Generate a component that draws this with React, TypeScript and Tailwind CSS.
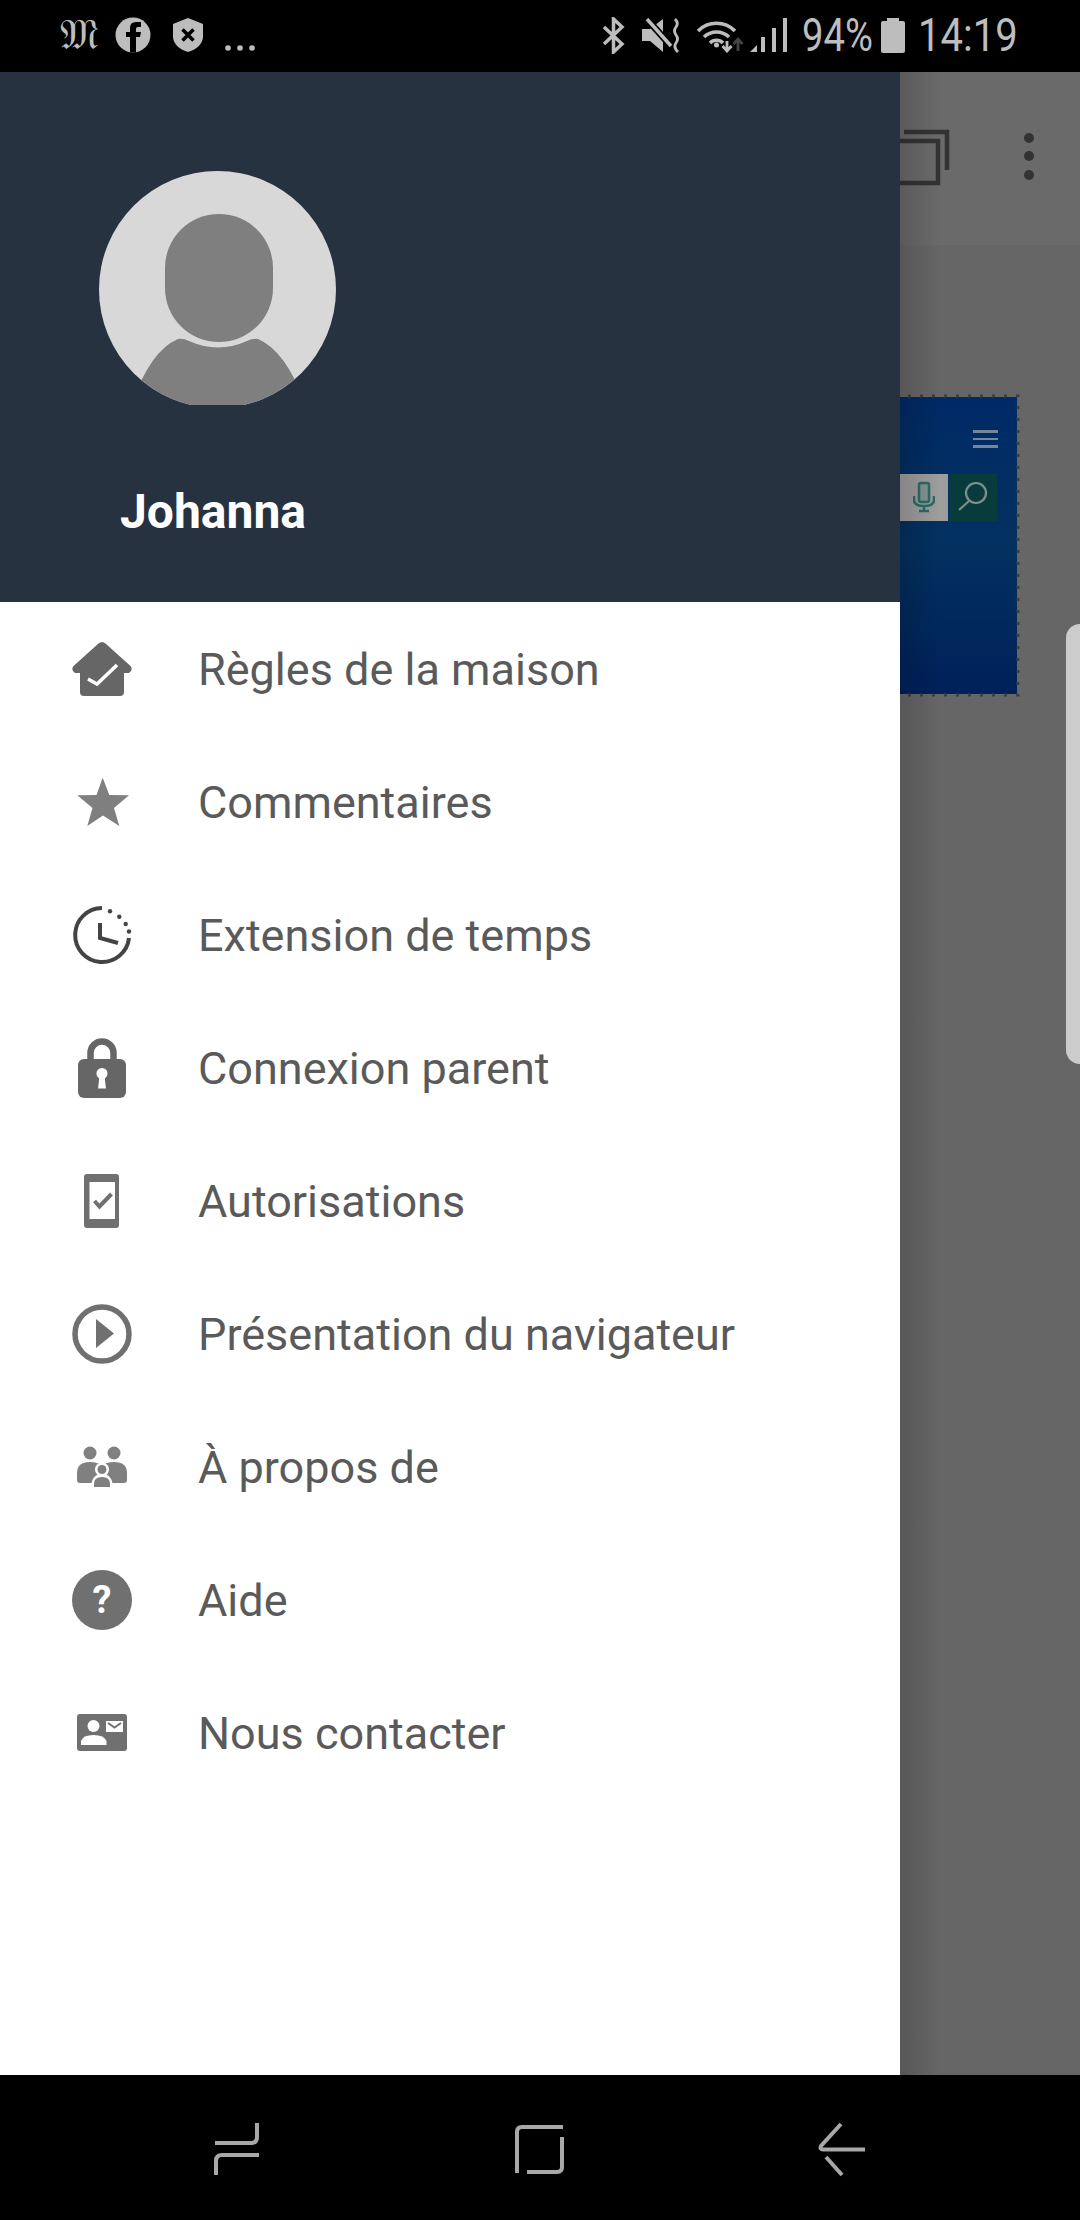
const statusColor = '#bdbdbd';

function LeftStatusIcons() {
  return (
    <div className="flex items-center pl-[60px]">
      <span className="w-[38px] text-center font-['DejaVu_Serif',serif] text-[42px] leading-[36px] text-[#bdbdbd]">𝔐</span>
      <svg width="36" height="36" viewBox="0 0 36 36" className="ml-[17px]">
        <circle cx="18" cy="18" r="17.5" fill={statusColor} />
        <path d="M15 35.5V20h-4v-5h4v-4q0-6 6-6h5v5h-3q-2 0-2 2v3h5l-1 5h-4v15.5z" fill="#000" />
      </svg>
      <svg width="30" height="34" viewBox="0 0 30 34" className="ml-[22px]">
        <path d="M15 0l15 6v12q0 11-15 16Q0 29 0 18V6z" fill={statusColor} />
        <path d="M9.5 11.5l11 11M20.5 11.5l-11 11" stroke="#000" strokeWidth="3.5" />
      </svg>
      <svg width="30" height="36" viewBox="0 0 30 36" className="ml-[22px]">
        <circle cx="3" cy="31" r="2.8" fill={statusColor} />
        <circle cx="15" cy="31" r="2.8" fill={statusColor} />
        <circle cx="27" cy="31" r="2.8" fill={statusColor} />
      </svg>
    </div>
  );
}

function RightStatusIcons() {
  return (
    <div className="flex items-center pr-[66px]">
      <svg width="23" height="37" viewBox="0 0 23 37">
        <path d="M2 10l18 17-8.500 8V2l8.500 8L2 27" fill="none" stroke={statusColor} strokeWidth="3.5" />
      </svg>
      <svg width="38" height="35" viewBox="0 0 38 35" className="ml-[17px]">
        <path d="M0 11h8L21 1v33L8 23H0z" fill={statusColor} />
        <path d="M4 0l25 28" stroke="#000" strokeWidth="7" />
        <path d="M5 1l24 27" stroke={statusColor} strokeWidth="3.500" />
        <path d="M33 1q4 4 1 8t0 8q3 4 0 8t2 9" fill="none" stroke={statusColor} strokeWidth="2.800" />
      </svg>
      <svg width="49" height="35" viewBox="0 0 49 35" className="ml-[16px]">
        <g fill="none" stroke={statusColor} strokeWidth="3.500">
          <path d="M2 13a26 26 0 0 1 37 0" />
          <path d="M8 19a18 18 0 0 1 25 0" />
          <path d="M14 25a9 9 0 0 1 13 0" />
        </g>
        <circle cx="20.500" cy="27" r="2.500" fill={statusColor} />
        <path d="M31 23v9M26.500 28l4.500 5 4.500-5" fill="none" stroke={statusColor} strokeWidth="2.800" />
        <path d="M42 33V23M37.500 26l4.500-5 4.500 5" fill="none" stroke="#444" strokeWidth="2.800" />
      </svg>
      <svg width="37" height="34" viewBox="0 0 37 34" className="ml-[5px]">
        <path d="M0 34l7-7v7z" fill={statusColor} />
        <path d="M11 19h4v15h-4zM22 10h4v24h-4zM33 0h4v34h-4z" fill={statusColor} />
      </svg>
      <span className="ml-[15px] w-[69px] origin-left scale-x-[0.83] whitespace-nowrap text-[46px] leading-[46px] font-normal text-[#bdbdbd]">
        94%
      </span>
      <svg width="24" height="35" viewBox="0 0 24 35" className="ml-[10px]">
        <path d="M6 0h12v3h4q2 0 2 2v28q0 2-2 2H2q-2 0-2-2V5q0-2 2-2h4z" fill={statusColor} />
      </svg>
      <span className="ml-[13px] w-[96px] origin-left scale-x-[0.87] whitespace-nowrap text-[46px] leading-[46px] font-normal text-[#bdbdbd]">
        14:19
      </span>
    </div>
  );
}

function Avatar() {
  return (
    <svg width="237" height="234" viewBox="0 0 237 234">
      <defs>
        <clipPath id="avatarCircle">
          <circle cx="118.500" cy="118.500" r="118.500" />
        </clipPath>
      </defs>
      <circle cx="118.500" cy="118.500" r="118.500" fill="#d8d8d8" />
      <rect x="66" y="43" width="108" height="128" rx="54" ry="54" fill="#7f7f7f" />
      <path
        d="M30 240Q50 180 79 168q5-1 11 2 29 13 58 0 6-3 11-2 29 12 50 72z"
        fill="#7f7f7f"
        clipPath="url(#avatarCircle)"
      />
    </svg>
  );
}

const HouseIcon = (
  <svg width="60" height="60" viewBox="0 0 60 60">
    <path d="M26.500 4.500q3.500-3 7 0L58.500 27q3 4-1.500 7H52v19q0 4-4 4H12q-4 0-4-4V34H3q-4.500-3-1.500-7z" fill="#666" />
    <path d="M16 40l9 5 20-19" fill="none" stroke="#fff" strokeWidth="3.500" />
  </svg>
);

const StarIcon = (
  <svg width="60" height="60" viewBox="0 0 60 60">
    <path d="M30.700 5.700L37.300 23 57 23.300 42 36l5.300 18L31 43.500 15.300 54l5.200-18L5.300 23.300 24.500 23z" fill="#7f7f7f" />
  </svg>
);

const ClockIcon = (
  <svg width="60" height="60" viewBox="0 0 60 60">
    <g fill="none" stroke="#444" strokeWidth="4">
      <path d="M30 3A27 27 0 1 0 57 33" />
      <path d="M28 18v15l18 5" />
    </g>
    <g fill="#444">
      <circle cx="38" cy="6.300" r="2.200" />
      <circle cx="47.300" cy="11.700" r="2.200" />
      <circle cx="53.700" cy="19" r="2.200" />
      <circle cx="57" cy="26.500" r="2.200" />
    </g>
  </svg>
);

const LockIcon = (
  <svg width="60" height="60" viewBox="0 0 60 60">
    <path d="M18.500 24V15a11.500 11.500 0 0 1 23 0v9" fill="none" stroke="#666" strokeWidth="6.500" />
    <rect x="6" y="21" width="48" height="39" rx="6" fill="#666" />
    <circle cx="30" cy="35.500" r="5.500" fill="#fff" />
    <path d="M27.500 38L26 50.500h8L32.500 38z" fill="#fff" />
  </svg>
);

const PhoneIcon = (
  <svg width="60" height="60" viewBox="0 0 60 60">
    <rect x="12" y="3" width="35" height="54" rx="3" fill="#707070" />
    <rect x="17.500" y="11" width="25.500" height="37" fill="#fff" />
    <path d="M22.500 30l5 5.500L39.500 23" fill="none" stroke="#707070" strokeWidth="4" />
  </svg>
);

const PlayIcon = (
  <svg width="60" height="60" viewBox="0 0 60 60">
    <circle cx="30" cy="30" r="27" fill="none" stroke="#707070" strokeWidth="5.500" />
    <path d="M24 15l18 14.500L24 44z" fill="#707070" />
  </svg>
);

const GroupIcon = (
  <svg width="60" height="60" viewBox="0 0 60 60">
    <circle cx="18" cy="16" r="6.500" fill="#808080" />
    <circle cx="42" cy="16" r="6.500" fill="#808080" />
    <path d="M5 36q0-11 13-11 8 0 12 4 4-4 12-4 13 0 13 11v7q0 3-3 3H8q-3 0-3-3z" fill="#808080" />
    <circle cx="30" cy="32.500" r="7" fill="#fff" />
    <path d="M19 52q0-15 11-15t11 15z" fill="#fff" />
    <circle cx="30" cy="32.500" r="4.500" fill="#808080" />
    <path d="M22 50v-3q0-7 8-7t8 7v3z" fill="#808080" />
  </svg>
);

const HelpIcon = (
  <svg width="60" height="60" viewBox="0 0 60 60">
    <circle cx="30" cy="30" r="30" fill="#707070" />
    <text x="30" y="43" textAnchor="middle" fontFamily="Roboto, sans-serif" fontSize="38" fontWeight="700" fill="#fff">
      ?
    </text>
  </svg>
);

const ContactIcon = (
  <svg width="60" height="60" viewBox="0 0 60 60">
    <rect x="5" y="11" width="50" height="37" rx="3" fill="#707070" />
    <path d="M34 18h17v11H34z" fill="#fff" />
    <path d="M36 20l6.500 4.500L49 20" fill="none" stroke="#707070" strokeWidth="2" />
    <circle cx="21.500" cy="23" r="6" fill="#fff" />
    <path d="M9 42v-4q2-6 12.500-6T34.500 38v4z" fill="#fff" />
  </svg>
);

const menuItems = [
  { label: 'Règles de la maison', icon: HouseIcon },
  { label: 'Commentaires', icon: StarIcon },
  { label: 'Extension de temps', icon: ClockIcon },
  { label: 'Connexion parent', icon: LockIcon },
  { label: 'Autorisations', icon: PhoneIcon },
  { label: 'Présentation du navigateur', icon: PlayIcon },
  { label: 'À propos de', icon: GroupIcon },
  { label: 'Aide', icon: HelpIcon },
  { label: 'Nous contacter', icon: ContactIcon },
];

function Drawer() {
  return (
    <aside className="flex w-[900px] shrink-0 flex-col bg-white">
      <div className="h-[530px] bg-[#263240] pt-[99px] pl-[99px]">
        <Avatar />
        <div className="mt-[80px] ml-[21px] text-[48px] leading-[54px] font-bold text-white">Johanna</div>
      </div>
      <ul>
        {menuItems.map((item) => (
          <li key={item.label} className="flex h-[133px] items-center pl-[72px]">
            {item.icon}
            <span className="ml-[66px] pt-[3px] text-[45px] text-[#5a5a5a]">{item.label}</span>
          </li>
        ))}
      </ul>
    </aside>
  );
}

function BackgroundPage() {
  return (
    <div className="relative flex-1 overflow-hidden bg-[#666]">
      <div className="flex h-[173px] items-start bg-[#6a6a6a]">
        <svg width="50" height="60" viewBox="0 0 50 60" className="mt-[57px] ml-[-2px] overflow-visible">
          <path d="M6 3h43v38" fill="none" stroke="#333" strokeWidth="4.500" />
          <path d="M-6 12h46v42H-6" fill="none" stroke="#333" strokeWidth="4.500" />
        </svg>
        <svg width="12" height="50" viewBox="0 0 12 50" className="mt-[61px] ml-[75px]">
          <circle cx="6" cy="5" r="5" fill="#333" />
          <circle cx="6" cy="23" r="5" fill="#333" />
          <circle cx="6" cy="42" r="5" fill="#333" />
        </svg>
      </div>
      <div className="relative mt-[152px] h-[297px] w-[117px] bg-gradient-to-b from-[#002a66] via-[#03315f] to-[#00205a]">
        <div className="flex flex-col items-end gap-[5px] pt-[33px] pr-[19px]">
          <div className="h-[2.5px] w-[25px] bg-[#76859a]" />
          <div className="h-[2.5px] w-[25px] bg-[#76859a]" />
          <div className="h-[2.5px] w-[25px] bg-[#76859a]" />
        </div>
        <div className="mt-[26px] flex h-[47px]">
          <div className="flex w-[48px] items-center justify-center bg-[#9d9d9d]">
            <svg width="22" height="32" viewBox="0 0 22 32">
              <path d="M6 4q0-2 2-2h6q2 0 2 2v15q0 2-2 2H8q-2 0-2-2z" fill="#7f9593" stroke="#2d6a66" strokeWidth="2.500" />
              <path d="M1 15v4q0 6 10 6t10-6v-4M11 25v4M6 30h10" fill="none" stroke="#2d6a66" strokeWidth="2.500" />
            </svg>
          </div>
          <div className="ml-px flex w-[48px] items-center justify-center bg-[#083c3c]">
            <svg width="32" height="32" viewBox="0 0 32 32">
              <circle cx="19" cy="12" r="10" fill="none" stroke="#7f908e" strokeWidth="2.200" />
              <path d="M12 20L2 29" stroke="#7f908e" strokeWidth="2.200" />
            </svg>
          </div>
        </div>
        <svg width="117" height="297" viewBox="0 0 117 297" className="absolute inset-0 overflow-visible">
          <path d="M8 -1H118V298H8" fill="none" stroke="#3f3f3f" strokeWidth="3" strokeDasharray="3 9" />
        </svg>
      </div>
      {/* shadow the drawer casts over the page */}
      <div className="absolute inset-y-0 left-0 w-[40px] bg-gradient-to-r from-black/15 to-transparent" />
      <div className="absolute top-[552px] right-0 h-[440px] w-[14px] rounded-l-[20px] bg-[#cccccc]" />
    </div>
  );
}

function NavBar() {
  return (
    <div className="flex h-[145px] items-center justify-center gap-[243px] bg-black">
      <svg width="60" height="60" viewBox="0 0 60 60" className="mt-[1px]">
        <g fill="none" stroke="#a8a8a8" strokeWidth="4">
          <path d="M8 25h36q6 0 6-6V5" />
          <path d="M52 37H15q-6 0-6 6v14" />
        </g>
      </svg>
      <svg width="60" height="60" viewBox="0 0 60 60" className="mt-[1px]">
        <g fill="none" stroke="#a8a8a8" strokeWidth="4">
          <path d="M53 9H12q-5 0-5 5v41" />
          <path d="M52 19v30q0 5-5 5H17" />
        </g>
      </svg>
      <svg width="60" height="60" viewBox="0 0 60 60" className="mt-[1px]">
        <g fill="none" stroke="#a8a8a8" strokeWidth="4">
          <path d="M28 6L8 28q-2 3 2 3.500h42" />
          <path d="M13 39l16 18" />
        </g>
      </svg>
    </div>
  );
}

export default function App() {
  return (
    <div className="flex h-[2220px] w-[1080px] flex-col overflow-hidden bg-black font-['Roboto',sans-serif]">
      <div className="flex h-[72px] items-center justify-between pb-[2px]">
        <LeftStatusIcons />
        <RightStatusIcons />
      </div>
      <div className="flex flex-1">
        <Drawer />
        <BackgroundPage />
      </div>
      <NavBar />
    </div>
  );
}
